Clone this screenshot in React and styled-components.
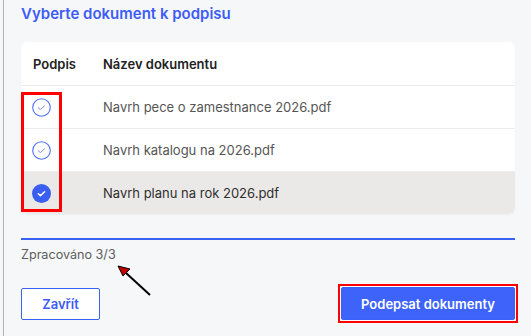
import React from "react";
import styled, { createGlobalStyle } from "styled-components";

const GlobalStyle = createGlobalStyle`
  html, body {
    margin: 0;
    padding: 0;
    background: #f6f7f9;
  }
  body {
    font-family: Inter, "Liberation Sans", Arial, sans-serif;
  }
`;

const Page = styled.div`
  margin-left: 3px;
  border-left: 1px solid #b4b4b4;
  height: 336px;
  box-sizing: border-box;
  padding: 4px 16px 0 17px;
  display: flex;
  flex-direction: column;
`;

const Title = styled.h2`
  margin: 0;
  font-size: 15px;
  line-height: 20px;
  font-weight: 600;
  color: #3d5cf6;
`;

const Card = styled.div`
  position: relative;
  margin-top: 18px;
  background: #fff;
  border-radius: 6px;
  box-shadow: 0 1px 2px rgba(0, 0, 0, 0.04);
`;

const Row = styled.div`
  display: flex;
  align-items: center;
  height: ${({ head }) => (head ? "43px" : "42px")};
  border-bottom: ${({ last }) => (last ? "none" : "1px solid #ececec")};
  background: ${({ selected }) => (selected ? "#ebe9e7" : "transparent")};
  border-radius: ${({ last }) => (last ? "0 0 6px 6px" : "0")};
`;

const CheckCell = styled.div`
  width: 82px;
  padding-left: 12px;
  box-sizing: border-box;
  display: flex;
  align-items: center;
  font-size: 13px;
  font-weight: 600;
  color: #222;
`;

const NameCell = styled.div`
  flex: 1;
  font-size: 13px;
  font-weight: ${({ head }) => (head ? 600 : 400)};
  color: ${({ head, selected }) =>
    head ? "#222" : selected ? "#2f2f2f" : "#555"};
`;

const CheckIcon = styled.svg`
  display: block;
  margin-left: -1px;
`;

const Highlight = styled.div`
  position: absolute;
  left: 0;
  top: 50px;
  width: 41px;
  height: 120px;
  box-sizing: border-box;
  border: 3px solid #ff0000;
  pointer-events: none;
`;

const Progress = styled.div`
  margin-top: 24px;
  height: 2px;
  background: #3b62f6;
`;

const Status = styled.div`
  position: relative;
  margin-top: 6px;
  font-size: 12.6px;
  line-height: 18px;
  color: #5c5c5c;
`;

const Arrow = styled.svg`
  position: absolute;
  left: 95px;
  top: 18px;
`;

const Actions = styled.div`
  margin-top: 20px;
  display: flex;
  justify-content: space-between;
  align-items: center;
`;

const Marker = styled.div`
  display: flex;
  padding: 1px;
  background: #fff;
  border: 2px solid #ff0000;
  margin-right: -3px;
`;

const Button = styled.button`
  height: ${({ primary }) => (primary ? "33px" : "32px")};
  padding: 0;
  width: ${({ primary }) => (primary ? "174px" : "79px")};
  border-radius: 2px;
  border: 1px solid #3b62f6;
  background: ${({ primary }) => (primary ? "#3d63fb" : "#fff")};
  color: ${({ primary }) => (primary ? "#fff" : "#3d5cf6")};
  font-family: inherit;
  font-size: 13px;
  font-weight: 600;
  cursor: pointer;
`;

const documents = [
  { id: 1, name: "Navrh pece o zamestnance 2026.pdf", selected: false },
  { id: 2, name: "Navrh katalogu na 2026.pdf", selected: false },
  { id: 3, name: "Navrh planu na rok 2026.pdf", selected: true },
];

function Check({ filled }) {
  return (
    <CheckIcon width="19" height="19" viewBox="0 0 19 19">
      {filled ? (
        <circle cx="9.5" cy="9.5" r="9.5" fill="#3a5ef0" />
      ) : (
        <circle cx="9.5" cy="9.5" r="8.8" fill="none" stroke="#4d6ff5" strokeWidth="1.1" />
      )}
      <path
        d="M6.3 9.8 L8.4 11.6 L12.6 7.7"
        fill="none"
        stroke={filled ? "#fff" : "#7d8fd8"}
        strokeWidth={filled ? 1.5 : 1}
        strokeLinecap="round"
        strokeLinejoin="round"
      />
    </CheckIcon>
  );
}

export default function App() {
  return (
    <>
      <GlobalStyle />
      <Page>
        <Title>Vyberte dokument k podpisu</Title>
        <Card>
          <Row head>
            <CheckCell>Podpis</CheckCell>
            <NameCell head>Název dokumentu</NameCell>
          </Row>
          {documents.map((doc, i) => (
            <Row key={doc.id} selected={doc.selected} last={i === documents.length - 1}>
              <CheckCell>
                <Check filled={doc.selected} />
              </CheckCell>
              <NameCell selected={doc.selected}>{doc.name}</NameCell>
            </Row>
          ))}
          <Highlight />
        </Card>
        <Progress />
        <Status>
          Zpracováno 3/3
          <Arrow width="40" height="36" viewBox="0 0 40 36">
            <line x1="34" y1="31" x2="10" y2="9" stroke="#000" strokeWidth="2" />
            <polygon points="2,2 14,5 7,12" fill="#c00000" stroke="#000" strokeWidth="1" />
          </Arrow>
        </Status>
        <Actions>
          <Button>Zavřít</Button>
          <Marker>
            <Button primary>Podepsat dokumenty</Button>
          </Marker>
        </Actions>
      </Page>
    </>
  );
}
